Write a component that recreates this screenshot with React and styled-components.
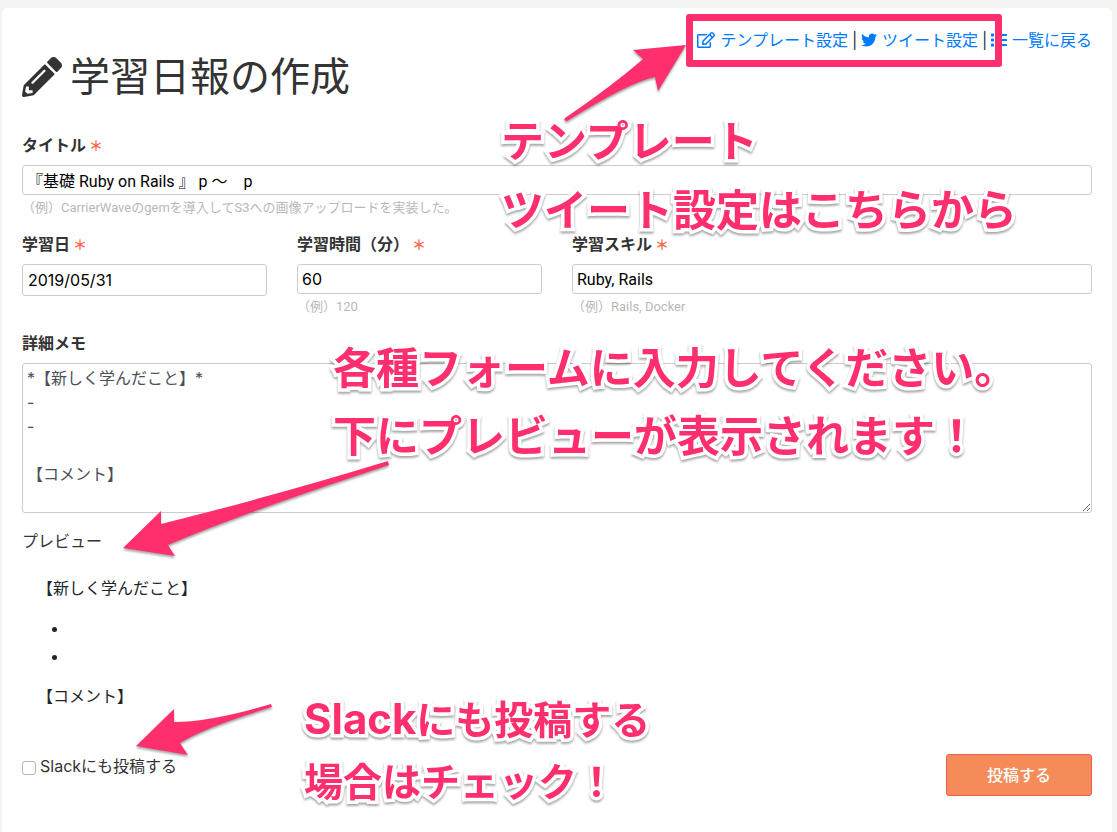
import React, { useState } from "react";
import styled, { createGlobalStyle } from "styled-components";
import { FaPencilAlt, FaRegEdit, FaTwitter, FaList } from "react-icons/fa";

const pink = "#ff2f6e";

const GlobalStyle = createGlobalStyle`
  *, *::before, *::after { box-sizing: border-box; }
  body {
    margin: 0;
    background: #f3f3f1;
    color: #333;
    font-family: Inter, "Noto Sans CJK JP", sans-serif;
    font-size: 16px;
    line-height: 24px;
  }
  input, textarea, button { font: inherit; }
`;

const Page = styled.div`
  position: relative;
  min-height: 100vh;
  padding: 8px 5px 0 2px;
  display: flex;
`;

const Card = styled.main`
  flex: 1;
  min-width: 0;
  padding: 20px 20px 36px;
  background: #fff;
  border-radius: 5px 5px 0 0;
`;

const LinkBar = styled.nav`
  display: flex;
  justify-content: flex-end;
  gap: 4px;
`;

const NavLink = styled.a`
  display: flex;
  align-items: center;
  gap: 5px;
  color: #007bff;
  text-decoration: none;
`;

const Divider = styled.span`
  width: 5px;
  text-align: center;
`;

const Heading = styled.h1`
  display: flex;
  align-items: center;
  gap: 8px;
  margin: 0 0 32px;
  font-size: 40px;
  font-weight: 400;
  line-height: 49px;
`;

const Form = styled.form`
  display: flex;
  flex-direction: column;
`;

const FieldRow = styled.div`
  display: grid;
  grid-template-columns: 245fr 245fr 520fr;
  column-gap: 30px;
`;

const Field = styled.div`
  display: flex;
  flex-direction: column;
  margin-bottom: ${(p) => p.$gap || 0}px;
`;

const Label = styled.label`
  margin-bottom: 8px;
  font-weight: 700;
`;

const Required = styled.span`
  margin-left: 3px;
  color: #ff6850;
  font-size: 14px;
  line-height: 1;
`;

const TextBox = styled.input`
  width: 100%;
  height: ${(p) => (p.$date ? 32 : 30)}px;
  padding: 0 ${(p) => (p.$date ? 5 : 4)}px;
  border: 1px solid #ccc;
  border-radius: 3px;
  background: #fff;
  color: #000;
  font-family: ${(p) => (p.$prose ? "Roboto" : "Inter")}, "Noto Sans CJK JP", sans-serif;
`;

const Hint = styled.small`
  margin-top: 1px;
  color: #b8b8b8;
  font-family: Roboto, "Noto Sans CJK JP", sans-serif;
  font-size: 13px;
`;

const Memo = styled.textarea`
  display: block;
  width: 100%;
  height: 150px;
  padding: 2px 4px;
  border: 1px solid #ccc;
  border-radius: 3px;
  color: #495057;
  resize: vertical;
`;

const Preview = styled.section`
  padding: 23px 15px 0;
  color: #212529;

  p { margin: 0 0 14px; }
  ul { margin: 0 0 14px; padding-left: 32px; }
  li { height: 28px; line-height: 28px; }
`;

const Footer = styled.div`
  display: flex;
  align-items: center;
  justify-content: space-between;
  margin-top: 32px;
`;

const CheckLabel = styled.label`
  display: flex;
  align-items: center;
  gap: 4px;
  margin-bottom: 18px;
`;

const Check = styled.input`
  appearance: none;
  width: 14px;
  height: 14px;
  margin: 3px 0 0;
  border: 1px solid #b5b5b5;
  border-radius: 3px;
  background: #fff;

  &:checked { background: #007bff; }
`;

const Submit = styled.button`
  width: 146px;
  height: 42px;
  border: 1px solid #ee5a5a;
  border-radius: 3px;
  background: #f48b59;
  color: #fff;
  font-weight: 500;
`;

const Callout = styled.p`
  position: absolute;
  left: ${(p) => p.$x}px;
  top: ${(p) => p.$y}px;
  margin: 0;
  color: ${pink};
  font-size: ${(p) => p.$size}px;
  font-weight: 700;
  line-height: ${(p) => p.$line}px;
  white-space: nowrap;
  -webkit-text-stroke: 7px #fff;
  paint-order: stroke fill;
  filter: drop-shadow(0 2px 1px rgba(0, 0, 0, 0.35));
  pointer-events: none;
`;

const Latin = styled.span`
  font-size: 42px;
  line-height: 1;
`;

const Frame = styled.div`
  position: absolute;
  top: 14px;
  right: 115px;
  width: 316px;
  height: 53px;
  border: 7px solid ${pink};
  border-radius: 3px;
  pointer-events: none;
`;

const Arrows = styled.svg`
  position: absolute;
  left: 0;
  top: 0;
  fill: ${pink};
  filter: drop-shadow(0 2px 1px rgba(0, 0, 0, 0.35));
  pointer-events: none;
`;

const initialMemo = "*【新しく学んだこと】*\n-\n-\n\n【コメント】";

export default function App() {
  const [toSlack, setToSlack] = useState(false);
  return (
    <Page>
      <GlobalStyle />
      <Card>
        <LinkBar>
          <NavLink href="#template"><FaRegEdit size={18} />テンプレート設定</NavLink>
          <Divider>|</Divider>
          <NavLink href="#tweet"><FaTwitter />ツイート設定</NavLink>
          <Divider>|</Divider>
          <NavLink href="#list"><FaList />一覧に戻る</NavLink>
        </LinkBar>
        <Heading><FaPencilAlt />学習日報の作成</Heading>
        <Form onSubmit={(e) => e.preventDefault()}>
          <Field $gap={12}>
            <Label htmlFor="title">タイトル<Required>＊</Required></Label>
            <TextBox id="title" $prose defaultValue="『基礎 Ruby on Rails 』 p 〜　p" />
            <Hint>（例）CarrierWaveのgemを導入してS3への画像アップロードを実装した。</Hint>
          </Field>
          <FieldRow>
            <Field>
              <Label htmlFor="date">学習日<Required>＊</Required></Label>
              <TextBox id="date" $date defaultValue="2019/05/31" />
            </Field>
            <Field $gap={12}>
              <Label htmlFor="minutes">学習時間（分）<Required>＊</Required></Label>
              <TextBox id="minutes" defaultValue="60" />
              <Hint>（例）120</Hint>
            </Field>
            <Field $gap={12}>
              <Label htmlFor="skills">学習スキル<Required>＊</Required></Label>
              <TextBox id="skills" $prose defaultValue="Ruby, Rails" />
              <Hint>（例）Rails, Docker</Hint>
            </Field>
          </FieldRow>
          <Field $gap={16}>
            <Label htmlFor="memo">詳細メモ</Label>
            <Memo id="memo" defaultValue={initialMemo} />
          </Field>
          <div>プレビュー</div>
          <Preview>
            <p>【新しく学んだこと】</p>
            <ul><li /><li /></ul>
            <p>【コメント】</p>
          </Preview>
          <Footer>
            <CheckLabel>
              <Check type="checkbox" checked={toSlack} onChange={(e) => setToSlack(e.target.checked)} />
              Slackにも投稿する
            </CheckLabel>
            <Submit type="submit">投稿する</Submit>
          </Footer>
        </Form>
      </Card>
      <Arrows width="700" height="800" viewBox="0 0 700 800" aria-hidden="true">
        <path d="M565 118 Q612 86 643 59 L633 50 L686 45 L658 91 L655 77 Q630 82 567 121 Q563 121 565 118 Z" />
        <path d="M388 461 Q270 497 161 524 L161 511 L123 548 L175 556 L168 545 Q240 514 389 465 Z" />
        <path d="M271 704 Q210 722 174 722 L174 709 L136 746 L188 755 L180 743 Q205 727 272 707 Z" />
      </Arrows>
      <Frame />
      <Callout $x={501} $y={107} $size={43} $line={69}>テンプレート<br />ツイート設定はこちらから</Callout>
      <Callout $x={333} $y={334} $size={43} $line={68}>各種フォームに入力してください。<br />下にプレビューが表示されます！</Callout>
      <Callout $x={304} $y={689} $size={39} $line={62}><Latin>Slack</Latin>にも投稿する<br />場合はチェック！</Callout>
    </Page>
  );
}
